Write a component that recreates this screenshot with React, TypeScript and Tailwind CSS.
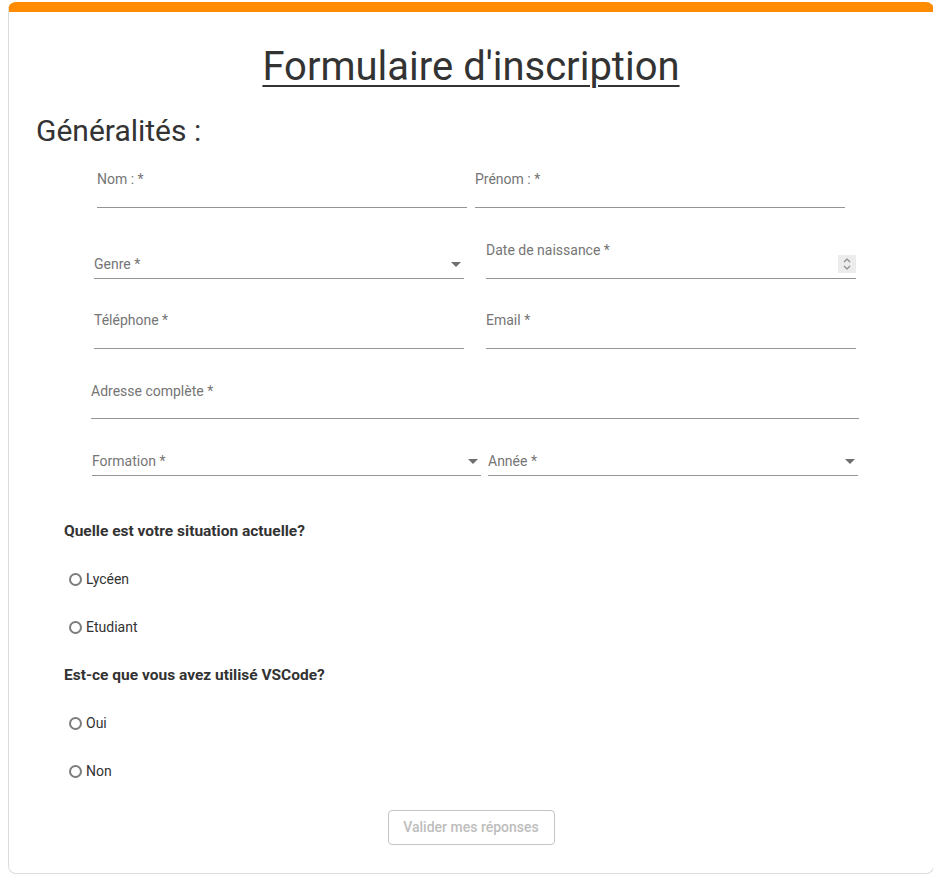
import React from "react";

const font = { fontFamily: "Roboto, 'Liberation Sans', sans-serif" };

function Arrow() {
  return (
    <svg width="10" height="5" viewBox="0 0 10 5" className="shrink-0">
      <path d="M0 0 L10 0 L5 5 Z" fill="#6f6f6f" />
    </svg>
  );
}

function Field({
  label,
  className = "",
  bottom = false,
  select = false,
  spinner = false,
}: {
  label: string;
  className?: string;
  bottom?: boolean;
  select?: boolean;
  spinner?: boolean;
}) {
  return (
    <div
      className={`flex border-b border-[#949494] ${
        bottom ? "items-end pb-[4px]" : "items-start"
      } ${className}`}
    >
      <span className="flex-1 text-[14px] leading-5 text-[#757575]">{label}</span>
      {select && (
        <span className="mb-[7px] mr-[3px]">
          <Arrow />
        </span>
      )}
      {spinner && (
        <span className="mt-[15px] flex h-[18px] w-[18px] items-center justify-center bg-[#ececec]">
          <svg width="10" height="14" viewBox="0 0 10 14">
            <path d="M2 5 L5 2 L8 5" stroke="#8a8a8a" strokeWidth="1.2" fill="none" />
            <path d="M2 9 L5 12 L8 9" stroke="#8a8a8a" strokeWidth="1.2" fill="none" />
          </svg>
        </span>
      )}
    </div>
  );
}

function Radio({ label }: { label: string }) {
  return (
    <label className="flex items-center text-[14px] leading-5 text-[#333]">
      <span className="ml-[5px] mr-[4px] h-[13px] w-[13px] rounded-full border-2 border-[#7d7d7d] bg-white" />
      {label}
    </label>
  );
}

export default function App() {
  return (
    <div className="bg-white pt-[2px]" style={font}>
      <div className="ml-2 flex w-[926px] flex-col rounded-lg border border-t-[10px] border-[#dcdcdc] border-t-[#ff8c00] pb-[28px]">
        <h1 className="mt-[32px] text-center text-[40px] leading-[46px] text-[#333] underline decoration-2 underline-offset-[5px]">
          Formulaire d'inscription
        </h1>
        <h2 className="ml-[27px] mt-[23px] text-[30px] leading-9 text-[#333]">Généralités :</h2>

        <div className="ml-[88px] mt-5 flex gap-2">
          <Field label="Nom : *" className="h-[39px] w-[370px]" />
          <Field label="Prénom : *" className="h-[39px] w-[370px]" />
        </div>

        <div className="ml-[85px] mt-[32px] flex gap-[22px]">
          <Field label="Genre *" bottom select className="h-[39px] w-[370px]" />
          <Field label="Date de naissance *" spinner className="h-[39px] w-[370px]" />
        </div>

        <div className="ml-[85px] mt-[31px] flex gap-[22px]">
          <Field label="Téléphone *" className="h-[39px] w-[370px]" />
          <Field label="Email *" className="h-[39px] w-[370px]" />
        </div>

        <div className="ml-[82px] mt-[32px] flex">
          <Field label="Adresse complète *" className="h-[38px] w-[768px]" />
        </div>

        <div className="ml-[83px] mt-[32px] flex gap-[7px]">
          <Field label="Formation *" bottom select className="h-[25px] w-[389px]" />
          <Field label="Année *" bottom select className="h-[25px] w-[370px]" />
        </div>

        <div className="ml-[55px] mt-[45px] flex flex-col gap-[28px]">
          <p className="text-[15.5px] font-bold leading-5 text-[#333]">Quelle est votre situation actuelle?</p>
          <Radio label="Lycéen" />
          <Radio label="Etudiant" />
          <p className="text-[15.5px] font-bold leading-5 text-[#333]">Est-ce que vous avez utilisé VSCode?</p>
          <Radio label="Oui" />
          <Radio label="Non" />
        </div>

        <div className="mt-[29px] flex justify-center">
          <button className="h-[35px] w-[167px] rounded border border-[#c4c4c4] text-[14px] font-medium text-[#bdbdbd]">
            Valider mes réponses
          </button>
        </div>
      </div>
    </div>
  );
}
